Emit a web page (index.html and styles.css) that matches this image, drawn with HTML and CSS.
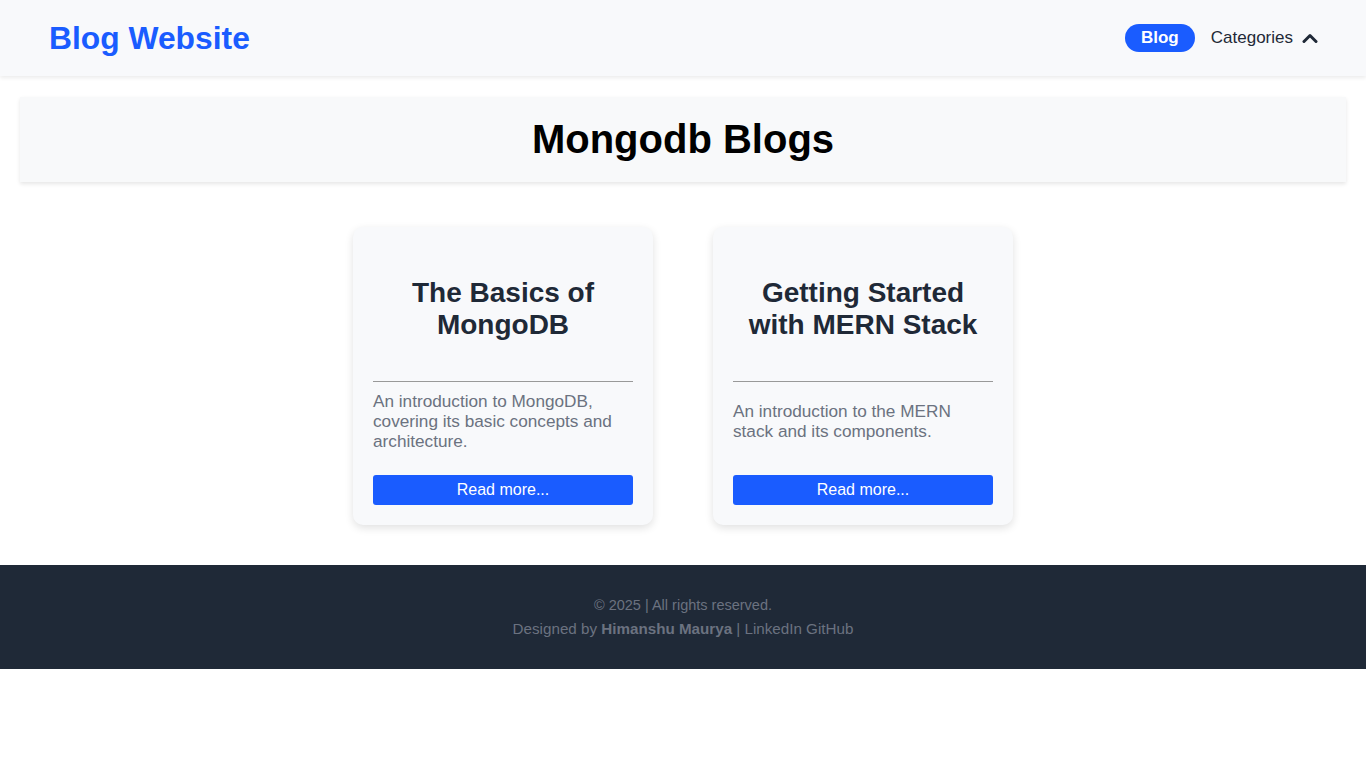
FILE: index.html
```html
<!DOCTYPE html>
<html lang="en">
<head>
<meta charset="utf-8">
<title>Blog Website</title>
<link rel="stylesheet" href="styles.css">
</head>
<body>
<header class="site-header">
  <a class="brand" href="#">Blog Website</a>
  <nav class="nav">
    <a class="nav-pill" href="#">Blog</a>
    <a class="nav-link" href="#">Categories
      <svg class="chev" width="16" height="12" viewBox="0 0 16 12"><path d="M2 9.5 L8 3.5 L14 9.5" fill="none" stroke="#1f2937" stroke-width="3" stroke-linecap="round" stroke-linejoin="round"/></svg>
    </a>
  </nav>
</header>
<main class="main">
  <section class="banner"><h1>Mongodb Blogs</h1></section>
  <section class="cards">
    <article class="card">
      <div class="card-title"><h2>The Basics of MongoDB</h2></div>
      <hr class="card-rule">
      <div class="card-desc"><p>An introduction to MongoDB, covering its basic concepts and architecture.</p></div>
      <a class="card-btn" href="#">Read more...</a>
    </article>
    <article class="card">
      <div class="card-title"><h2>Getting Started with MERN Stack</h2></div>
      <hr class="card-rule">
      <div class="card-desc"><p>An introduction to the MERN stack and its components.</p></div>
      <a class="card-btn" href="#">Read more...</a>
    </article>
  </section>
</main>
<footer class="footer">
  <p class="copy">© 2025 | All rights reserved.</p>
  <p class="credit">Designed by <strong>Himanshu Maurya</strong> | LinkedIn GitHub</p>
</footer>
</body>
</html>
```
FILE: styles.css
```css
* { box-sizing: border-box; }
html, body { margin: 0; padding: 0; }
body {
  font-family: "Liberation Sans", Arial, sans-serif;
  background: #ffffff;
  color: #111;
}
a { text-decoration: none; }

.site-header {
  height: 76px;
  background: #f8f9fb;
  box-shadow: 0 2px 4px rgba(0,0,0,0.08);
  display: flex;
  align-items: center;
  justify-content: space-between;
  padding: 0 48px 0 49px;
  position: relative;
}
.brand {
  color: #1a5cff;
  font-weight: bold;
  font-size: 31.8px;
}
.nav {
  display: flex;
  align-items: center;
  gap: 16px;
}
.nav-pill {
  background: #1a5cff;
  color: #fff;
  font-weight: bold;
  font-size: 17px;
  height: 28px;
  width: 70px;
  border-radius: 14px;
  display: flex;
  align-items: center;
  justify-content: center;
}
.nav-link {
  color: #1f2937;
  font-size: 17px;
  display: flex;
  align-items: center;
  gap: 9px;
}
.chev { display: block; }

.main {
  padding: 21px 20px 40px;
}
.banner {
  background: #f8f9fa;
  height: 85px;
  box-shadow: 0 2px 4px rgba(0,0,0,0.1);
  display: flex;
  align-items: center;
  justify-content: center;
}
.banner h1 {
  margin: 0;
  font-size: 40px;
  font-weight: bold;
  color: #000;
}
.cards {
  display: flex;
  justify-content: center;
  gap: 60px;
  margin-top: 45px;
}
.card {
  width: 300px;
  height: 298px;
  background: #f8f9fb;
  border-radius: 10px;
  box-shadow: 0 3px 8px rgba(0,0,0,0.12);
  padding: 20px;
  display: flex;
  flex-direction: column;
}
.card-title {
  height: 124px;
  display: flex;
  align-items: center;
  justify-content: center;
  text-align: center;
}
.card-title h2 {
  margin: 0;
  font-size: 28px;
  line-height: 32px;
  font-weight: bold;
  color: #1f2937;
}
.card-rule {
  margin: 10px 0 0;
  border: 0;
  border-top: 1px solid #999;
  height: 0;
}
.card-desc {
  height: 78px;
  display: flex;
  align-items: center;
  margin-bottom: 15px;
}
.card-desc p {
  margin: 0;
  font-size: 17.2px;
  line-height: 20px;
  color: #6b7280;
  padding-right: 2px;
}
.card-btn {
  height: 30px;
  background: #1a5cff;
  color: #fff;
  border-radius: 3px;
  font-size: 16px;
  display: flex;
  align-items: center;
  justify-content: center;
}

.footer {
  background: #1f2937;
  height: 104px;
  padding-top: 28px;
  text-align: center;
  color: #6b7280;
}
.footer p { margin: 0; line-height: 24px; }
.footer .copy { font-size: 14.5px; }
.footer .credit { font-size: 15.2px; }
.footer strong { font-weight: bold; }
```
